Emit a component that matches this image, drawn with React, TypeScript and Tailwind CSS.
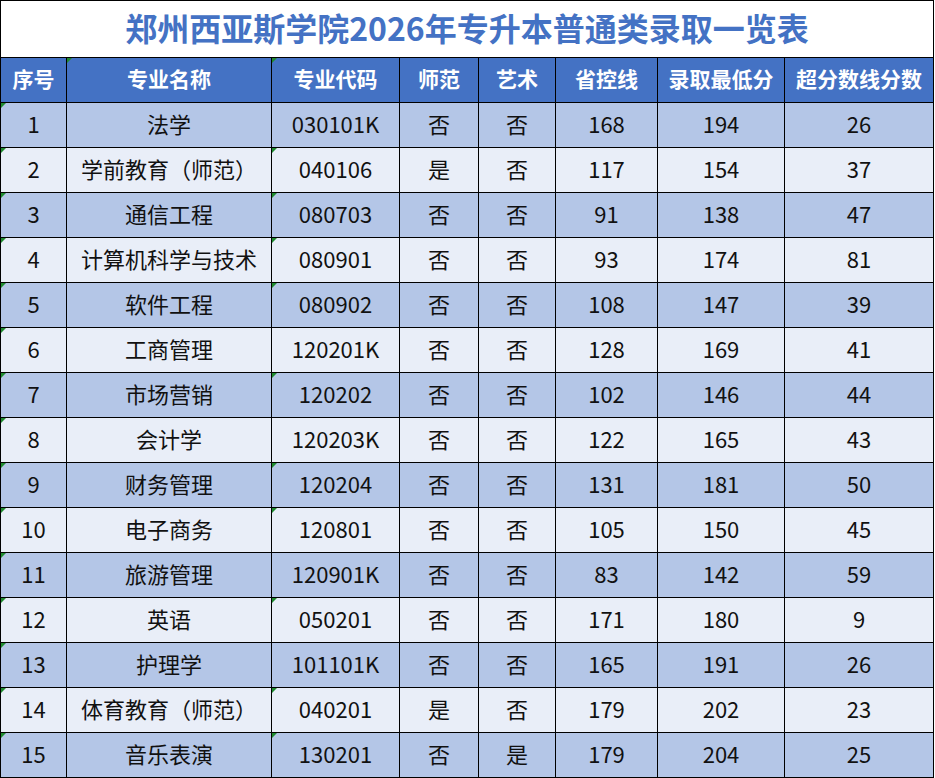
const rows: [string, string, string, string, string, string, string, string][] = [
  ['1', '法学', '030101K', '否', '否', '168', '194', '26'],
  ['2', '学前教育（师范）', '040106', '是', '否', '117', '154', '37'],
  ['3', '通信工程', '080703', '否', '否', '91', '138', '47'],
  ['4', '计算机科学与技术', '080901', '否', '否', '93', '174', '81'],
  ['5', '软件工程', '080902', '否', '否', '108', '147', '39'],
  ['6', '工商管理', '120201K', '否', '否', '128', '169', '41'],
  ['7', '市场营销', '120202', '否', '否', '102', '146', '44'],
  ['8', '会计学', '120203K', '否', '否', '122', '165', '43'],
  ['9', '财务管理', '120204', '否', '否', '131', '181', '50'],
  ['10', '电子商务', '120801', '否', '否', '105', '150', '45'],
  ['11', '旅游管理', '120901K', '否', '否', '83', '142', '59'],
  ['12', '英语', '050201', '否', '否', '171', '180', '9'],
  ['13', '护理学', '101101K', '否', '否', '165', '191', '26'],
  ['14', '体育教育（师范）', '040201', '是', '否', '179', '202', '23'],
  ['15', '音乐表演', '130201', '否', '是', '179', '204', '25'],
];

const headers = ['序号', '专业名称', '专业代码', '师范', '艺术', '省控线', '录取最低分', '超分数线分数'];

const cols = 'grid-cols-[66px_205px_128px_79px_77px_102px_127px_149px]';

// little green "number stored as text" marker, like excel
function Tri() {
  return (
    <span className="absolute left-0 top-0 w-0 h-0 border-t-[5px] border-r-[5px] border-t-[#1e8a2e] border-r-transparent" />
  );
}

export default function App() {
  return (
    <div
      className="w-[935px] h-[778px] bg-white"
      style={{ fontFamily: '"Noto Sans CJK SC", "Noto Sans", sans-serif' }}
    >
      <div className="w-[934px] border-l border-t border-black">
        <div className="h-[57px] pb-[5px] border-r border-b border-black flex items-center justify-center text-[32px] font-bold text-[#4472c4] leading-none">
          郑州西亚斯学院2026年专升本普通类录取一览表
        </div>
        <div className={`grid ${cols} bg-[#4472c4]`}>
          {headers.map((h, i) => (
            <div
              key={h}
              className="relative h-[45px] pb-[3px] border-r border-b border-black flex items-center justify-center text-[21px] font-bold text-white whitespace-nowrap"
            >
              {(i === 1 || i === 2) && <Tri />}
              {h}
            </div>
          ))}
        </div>
        {rows.map((r, ri) => (
          <div
            key={r[0]}
            className={`grid ${cols} ${ri % 2 === 0 ? 'bg-[#b4c6e7]' : 'bg-[#e9eef8]'}`}
          >
            {r.map((c, ci) => (
              <div
                key={ci}
                className="relative h-[45px] pb-[4px] border-r border-b border-black flex items-center justify-center text-[22px] text-[#111] whitespace-nowrap"
              >
                {(ci === 0 || (ci === 2 && !c.endsWith('K'))) && <Tri />}
                {c}
              </div>
            ))}
          </div>
        ))}
      </div>
    </div>
  );
}
